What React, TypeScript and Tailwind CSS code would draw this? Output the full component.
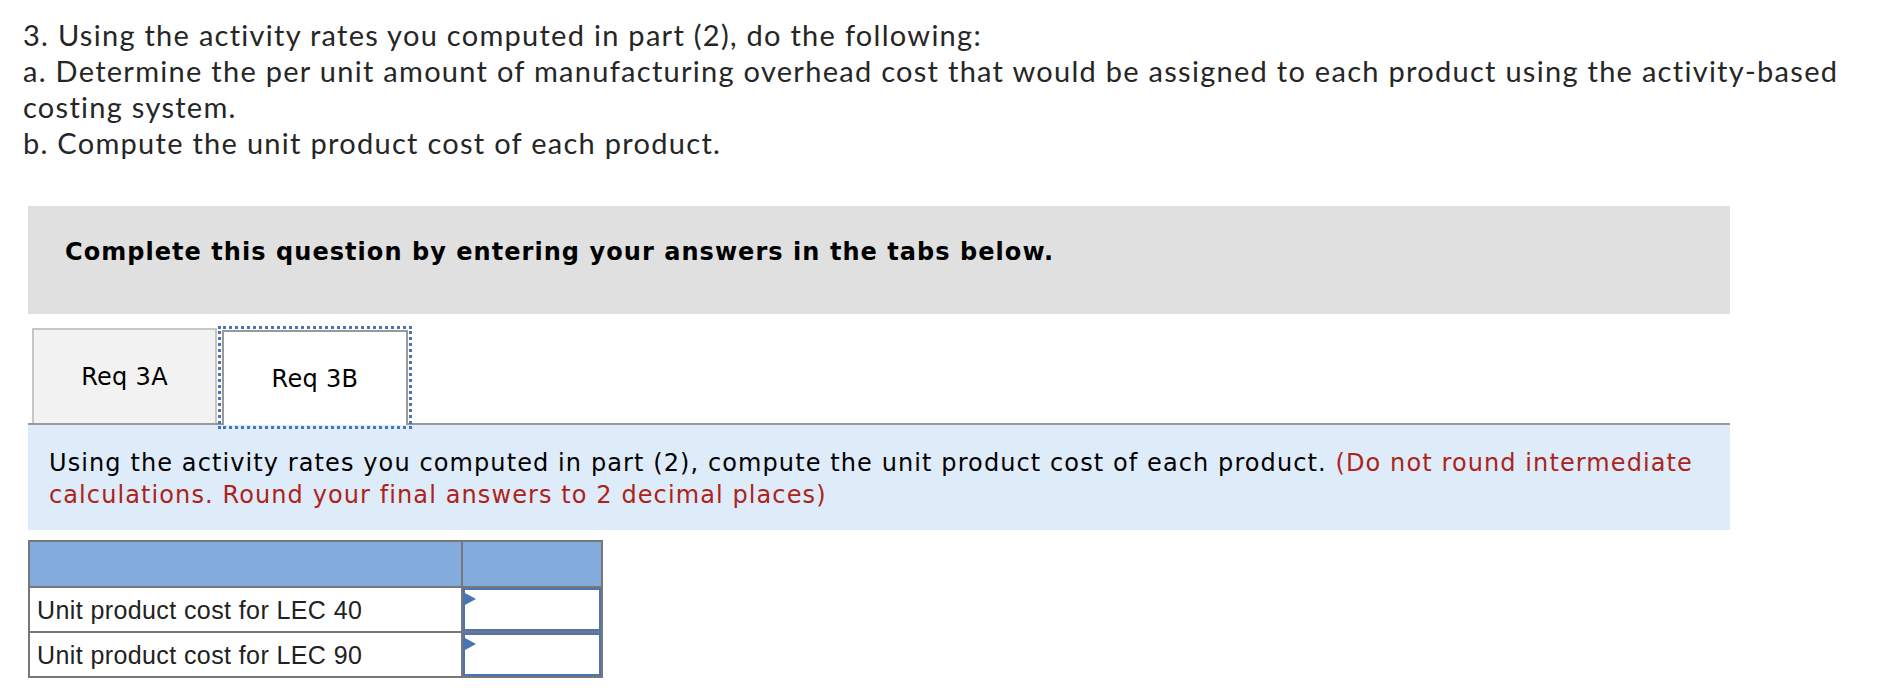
import React from "react";

const Arrow = () => (
  <svg className="absolute left-0 top-[3px]" width="11" height="12" viewBox="0 0 11 12">
    <polygon points="0,0 11,6 0,12" fill="#4a74b4" />
  </svg>
);

export default function App() {
  return (
    <div className="w-[1886px] h-[688px] bg-white relative overflow-hidden">
      <div
        className="pl-[23px] pt-[17px] text-[29px] leading-[36px] tracking-[1.28px] text-[#262626]"
        style={{ fontFamily: "Lato, 'Open Sans', sans-serif" }}
      >
        <div>3. Using the activity rates you computed in part (2), do the following:</div>
        <div>
          a. Determine the per unit amount of manufacturing overhead cost that would be assigned to each product using the activity-based
          <br />
          costing system.
        </div>
        <div>b. Compute the unit product cost of each product.</div>
      </div>

      <div className="ml-[28px] w-[1702px]" style={{ fontFamily: "'DejaVu Sans', Verdana, sans-serif" }}>
        <div className="mt-[45px] h-[108px] bg-[#e0e0e0] pl-[37px] pt-[32px]">
          <div className="text-[24px] leading-[28px] tracking-[1.05px] font-bold text-black">
            Complete this question by entering your answers in the tabs below.
          </div>
        </div>

        <div className="mt-[14px] flex items-end border-b-2 border-[#999999] h-[97px] pl-[4px]">
          <div className="w-[185px] h-[95px] border-2 border-b-0 border-[#c6c6c6] bg-[#f2f2f2] flex items-center justify-center text-[24px] tracking-[0.3px] text-black">
            Req 3A
          </div>
          <div className="relative ml-[5px] w-[186px] h-[95px] -mb-[2px] border-2 border-b-0 border-[#999999] bg-white flex items-center justify-center text-[24px] tracking-[0.3px] text-black outline-[3px] outline-dotted outline-[#4a74b8] outline-offset-[1px]">
            Req 3B
          </div>
        </div>

        <div className="bg-[#deebf8] h-[105px] pl-[21px] pt-[22px] text-[24px] leading-[32px] tracking-[1.1px] text-black">
          Using the activity rates you computed in part (2), compute the unit product cost of each product.{" "}
          <span className="text-[#ac231c]">
            (Do not round intermediate calculations. Round your final answers to 2 decimal places)
          </span>
        </div>

        <table
          className="mt-[10px] border-collapse text-[25px] tracking-[0.4px] text-[#222222]"
          style={{ fontFamily: "'Liberation Sans', Arial, sans-serif" }}
        >
          <tbody>
            <tr className="h-[46px]">
              <td className="w-[433px] border-2 border-[#777777] bg-[#83acdd]"></td>
              <td className="w-[140px] border-2 border-[#777777] bg-[#83acdd]"></td>
            </tr>
            <tr className="h-[45px]">
              <td className="border-2 border-[#777777] pl-[7px] pt-[2px]">Unit product cost for LEC 40</td>
              <td className="border-2 border-[#777777] p-0">
                <div className="relative h-[43px] border-2 border-[#4a74b4] bg-white">
                  <Arrow />
                </div>
              </td>
            </tr>
            <tr className="h-[45px]">
              <td className="border-2 border-[#777777] pl-[7px] pt-[2px]">Unit product cost for LEC 90</td>
              <td className="border-2 border-[#777777] p-0">
                <div className="relative h-[43px] border-2 border-[#4a74b4] bg-white">
                  <Arrow />
                </div>
              </td>
            </tr>
          </tbody>
        </table>
      </div>
    </div>
  );
}
